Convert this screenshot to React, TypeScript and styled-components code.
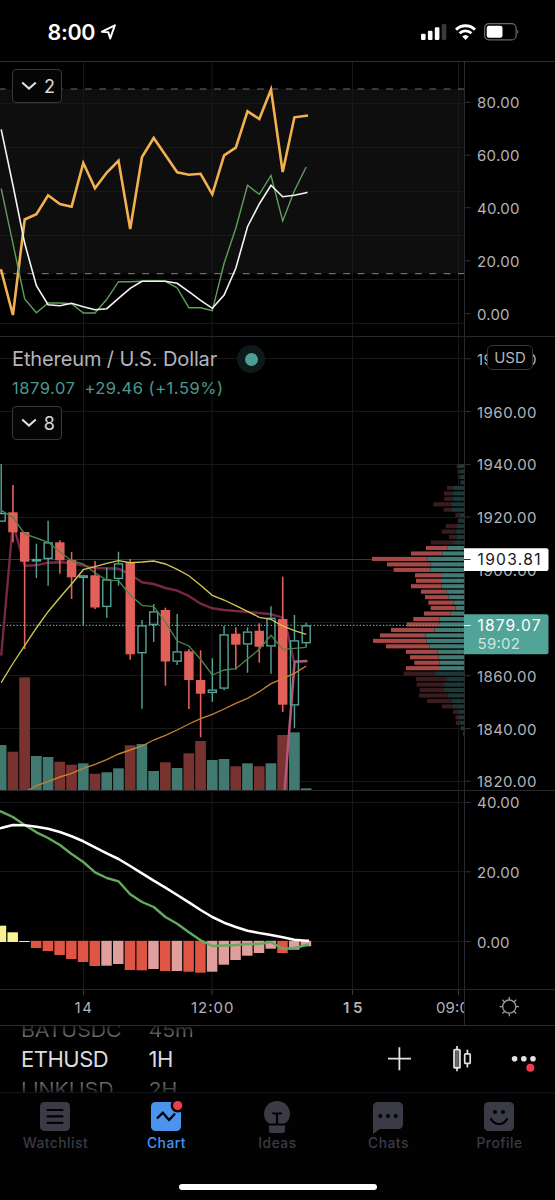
import React from 'react';
import styled, { createGlobalStyle } from 'styled-components';

const GlobalStyle = createGlobalStyle`
  * { box-sizing: border-box; }
  body { margin: 0; background: #000; }
`;

const c = {
  up: '#55a399',
  down: '#e1605a',
  grid: '#17181b',
  line: '#26282e',
  label: '#b3b3b8',
  muted: '#3a3b46',
  blue: '#4a94ee',
  badge: '#f23b4c',
};

const Screen = styled.div`
  width: 555px;
  height: 1200px;
  display: flex;
  flex-direction: column;
  overflow: hidden;
  background: #000;
  color: #fff;
  font-family: Inter, 'Liberation Sans', sans-serif;
`;

const StatusBar = styled.header`
  flex: none;
  height: 62px;
  padding: 2px 36px 0 47.5px;
  display: flex;
  align-items: center;
  justify-content: space-between;
  border-bottom: 1px solid #2b2e36;
`;

const Clock = styled.div`
  display: flex;
  align-items: center;
  gap: 5.5px;
  font-size: 21.5px;
  font-weight: 600;
  letter-spacing: -0.35px;
`;

const StatusIcons = styled.div`
  display: flex;
  align-items: center;
  gap: 8px;
`;

const Pane = styled.section<{ $h: number }>`
  position: relative;
  flex: none;
  height: ${(p) => p.$h}px;
  display: grid;
  grid-template-columns: 464px 91px;
  border-bottom: 1px solid ${c.line};
`;

const Drawing = styled.svg`
  display: block;
  overflow: hidden;
`;

const AxisText = styled.text<{ $bold?: boolean }>`
  font-family: Inter, 'Liberation Sans', sans-serif;
  font-size: 15px;
  font-weight: ${(p) => (p.$bold ? 600 : 400)};
  fill: ${c.label};
`;

const PriceText = styled(AxisText)`
  font-size: 15.6px;
`;

const Legend = styled.div<{ $top: number }>`
  position: absolute;
  left: 12px;
  top: ${(p) => p.$top}px;
  display: flex;
  flex-direction: column;
  align-items: flex-start;
`;

const TitleRow = styled.div`
  display: flex;
  align-items: center;
  gap: 20px;
  height: 28px;
`;

const Title = styled.span`
  font-size: 20px;
  letter-spacing: -0.12px;
  color: #b4b4b9;
  white-space: nowrap;
`;

const LiveDot = styled.span`
  width: 28px;
  height: 28px;
  border-radius: 50%;
  background: #0c1b1a;
  display: grid;
  place-items: center;
  &::after {
    content: '';
    width: 13px;
    height: 13px;
    border-radius: 50%;
    background: #4d9e93;
  }
`;

const Quote = styled.div`
  display: flex;
  gap: 9px;
  height: 20px;
  margin: 5px 0 8px;
  line-height: 20px;
  font-size: 16.5px;
  letter-spacing: 0.53px;
  color: #4a998e;
  white-space: nowrap;
`;

const CollapseButton = styled.button`
  width: 50px;
  height: 34px;
  padding: 0 6px 0 8px;
  display: flex;
  align-items: center;
  justify-content: space-between;
  border: 1px solid #343741;
  border-radius: 4px;
  background: #050506;
  color: #d8d8dc;
  font: 400 18px Inter, 'Liberation Sans', sans-serif;
`;

const CurrencyBadge = styled.div`
  position: absolute;
  left: 487px;
  top: 8px;
  width: 46px;
  height: 25px;
  display: grid;
  place-items: center;
  border: 1px solid #33353f;
  border-radius: 5px;
  background: #000;
  font-size: 15px;
  color: ${c.label};
`;

const TimeAxis = styled.div`
  flex: none;
  height: 36px;
  display: grid;
  grid-template-columns: 464px 91px;
  border-bottom: 1px solid #2b2e36;
`;

const Toolbar = styled.div`
  flex: none;
  height: 67px;
  padding: 0 18px 0 21px;
  display: flex;
  align-items: center;
  border-bottom: 1px solid #131418;
  overflow: hidden;
`;

const Wheel = styled.div<{ $w: number }>`
  width: ${(p) => p.$w}px;
  height: 67px;
  display: flex;
  flex-direction: column;
  align-items: flex-start;
  justify-content: center;
  gap: 1.5px;
  font-size: 22px;
  letter-spacing: -0.5px;
  white-space: nowrap;
`;

const WheelItem = styled.div<{ $edge?: 'top' | 'bottom' }>`
  flex: none;
  height: 28px;
  line-height: 28px;
  color: ${(p) => (p.$edge ? 'transparent' : '#dcdcde')};
  background: ${(p) =>
    p.$edge ? `linear-gradient(to ${p.$edge}, #727275 20%, #2a2a2c 65%)` : 'none'};
  background-clip: ${(p) => (p.$edge ? 'text' : 'border-box')};
  font-size: ${(p) => (p.$edge ? 21.5 : 22)}px;
  letter-spacing: ${(p) => (p.$edge ? -0.2 : -0.5)}px;
  transform: ${(p) => (p.$edge ? 'scaleY(0.85)' : 'none')};
`;

const Actions = styled.div`
  flex: 1;
  display: flex;
  justify-content: flex-end;
`;

const TabBar = styled.nav`
  flex: none;
  height: 91px;
  display: grid;
  grid-template-columns: repeat(5, 111px);
  background: #020202;
`;

const Tab = styled.div<{ $active?: boolean }>`
  padding-top: 6px;
  display: flex;
  flex-direction: column;
  align-items: center;
  color: ${(p) => (p.$active ? c.blue : c.muted)};
`;

const TabIcon = styled.svg`
  display: block;
  margin-right: 1px;
`;

const TabLabel = styled.span`
  margin-top: -1px;
  font-size: 13.8px;
  line-height: 18px;
  font-weight: 500;
  letter-spacing: 0.5px;
`;

const HomeArea = styled.footer`
  flex: 1;
  display: flex;
  justify-content: center;
  background: #020202;
`;

const HomeIndicator = styled.div`
  width: 198px;
  height: 6px;
  border-radius: 3px;
  background: #fff;
`;

const barX = (i: number) => 1.2 + i * 11.73;
const path = (ys: number[]) => ys.map((y, i) => `${barX(i).toFixed(1)},${y}`).join(' ');

const gridX = [83.5, 212, 352.5, 458.5];

const Grid = ({ top, height, rows }: { top: number; height: number; rows: number[] }) => (
  <g stroke={c.grid} strokeWidth={1}>
    {gridX.map((x) => <line key={x} x1={x} x2={x} y1={top} y2={top + height} />)}
    {rows.map((y) => <line key={y} x1={0} x2={464} y1={y} y2={y} />)}
  </g>
);

const Axis = ({ top, height, ticks, children }: {
  top: number; height: number; ticks: [string, number][]; children?: React.ReactNode;
}) => (
  <Drawing width={91} height={height} viewBox={`464 ${top} 91 ${height}`}>
    <line x1={464.5} x2={464.5} y1={top} y2={top + height} stroke={c.line} />
    {ticks.map(([t, y]) => (
      <g key={t}>
        <line x1={465} x2={470.5} y1={y} y2={y} stroke="#303238" />
        <AxisText x={477} y={y + 6} textLength={t.length === 7 ? 59.5 : t.length === 5 ? 42.5 : 32.5}>{t}</AxisText>
      </g>
    ))}
    {children}
  </Drawing>
);

const rsi = [270.5, 315, 219.5, 214.3, 195.3, 204, 206.7, 163, 188.3, 172.5, 160.8, 229, 157, 138, 155, 172.3, 174.7, 173.8, 194.3, 155.3, 147.7, 111.3, 119, 89.5, 172, 117.3, 115.7];
const stochK = [188.7, 243.3, 299, 312.7, 303, 303, 303.7, 313, 313, 299.3, 281.7, 281.7, 281.3, 281, 281.3, 288, 307.7, 307.7, 310.7, 263.3, 228.3, 185.3, 194.3, 175.5, 221, 190.7, 167];
const stochD = [129.3, 185, 243.3, 285.7, 304.7, 305.7, 303.3, 306.7, 309.7, 308.7, 298.3, 288.3, 281.3, 281.3, 281.3, 283.3, 291.7, 300.3, 308.3, 295, 268.3, 226.7, 204, 185.3, 196.7, 195.3, 192.7];

const volume: [number, 0 | 1][] = [
  [745, 1], [751.7, 0], [677.3, 0], [756, 1], [757, 1], [761.7, 0], [764.7, 0], [763.3, 1], [773.7, 0],
  [772.3, 1], [768.3, 1], [745.3, 0], [744, 1], [771, 1], [762.3, 0], [768, 1], [753.3, 0], [741, 0],
  [760, 1], [759, 1], [766.3, 0], [763.3, 1], [766.3, 0], [763.3, 1], [735, 0], [732.3, 1], [788.3, 1],
];

// [wick top, body top, body bottom, wick bottom, rising]
const candles: [number, number, number, number, 0 | 1][] = [
  [464, 513, 521.7, 521.7, 1], [485, 512.3, 532.3, 542.3, 0], [532, 532, 561.7, 649, 0],
  [543.7, 559, 561.5, 578, 1], [520.7, 542.3, 559, 585.7, 1], [540.3, 542.3, 560.3, 573.7, 0],
  [552, 560, 577.3, 599, 0], [575, 575.3, 578, 625, 1], [561, 575.3, 607.5, 609, 0],
  [567.7, 579.3, 607, 617.7, 1], [551.7, 563.3, 579, 585.7, 1], [559, 562.7, 654.3, 659.7, 0],
  [620, 625.3, 653.3, 708.7, 1], [604, 611.3, 625, 642, 1], [607.7, 610, 661.5, 685.7, 0],
  [614, 651.3, 661.7, 665, 1], [649, 651.3, 680, 709, 0], [650.3, 680, 693.7, 737.3, 0],
  [658.3, 689.5, 693, 702, 1], [626, 634.3, 688.7, 690.3, 1], [627.3, 633.7, 644.7, 669.7, 0],
  [627.3, 631.5, 644.5, 672.7, 1], [623.3, 630.7, 646.7, 662.7, 0], [606.3, 617.7, 646.5, 673.7, 1],
  [576.7, 619, 704.7, 712, 0], [615, 640.3, 705.5, 728, 1], [622.7, 625.3, 643.3, 647.3, 1],
];

const maYellow = [682.7, 663.5, 645.7, 628, 611.7, 597.5, 584, 569.7, 566.7, 563.3, 560.7, 562.7, 562, 561, 564, 569.3, 575.7, 585.3, 595.3, 600, 605.7, 611.3, 617.3, 619.3, 626, 630.7, 634.3];
const maGreen = [510.3, 517.3, 534, 538, 542.3, 551.7, 560.7, 564, 572.7, 580.3, 580.7, 595, 605.3, 606.7, 622, 641, 646, 659.3, 675, 670, 668.7, 659, 649.3, 635.3, 649.3, 648.3, 647.3];
const maMaroon = [655.7, 523, 565.7, 565.3, 562.7, 562.3, 563, 565.7, 568, 568.3, 568.7, 574.3, 582.3, 584, 588, 590.7, 596, 603.7, 608.3, 610, 611, 612, 613, 614.3, 617.7];
const maOrange = [785.5, 781.7, 777, 773.3, 768.3, 764.3, 759.7, 754, 750, 746, 740, 735.3, 730, 724, 718.7, 714.3, 709, 703.3, 698.3, 691.7, 683.7, 678.7, 673.3, 666];

// Each row: total width and rising part width, in thirds of a pixel from the right edge.
const profile: [number, number][] = [
  [22, 18], [20, 13], [16, 11], [12, 10], [51, 35], [60, 35], [59, 35], [92, 40], [61, 38], [26, 13],
  [19, 15], [55, 21], [67, 25], [45, 21], [100, 33], [114, 49], [159, 65], [276, 109], [231, 100], [211, 101],
  [147, 66], [144, 66], [159, 67], [129, 53], [117, 47], [107, 31], [100, 25], [120, 40], [152, 73], [172, 73],
  [219, 88], [252, 115], [273, 113], [234, 103], [174, 80], [162, 76], [149, 73], [174, 75], [181, 88], [144, 53],
  [142, 60], [133, 60], [135, 50], [111, 38], [67, 33], [33, 15], [26, 15], [24, 13], [10, 9], [3, 3],
];

const macd = [811.7, 817, 825, 832.3, 838, 845, 854, 862, 872.3, 878, 881.3, 894.3, 902, 907, 917, 923.7, 932.3, 940.3, 946, 945.5, 945, 944, 944, 942, 948.7, 948, 945];
const signal = [828, 825, 825.3, 826.7, 828.7, 832, 836.3, 841.3, 847.3, 853.3, 859, 866, 873.3, 880.7, 887.7, 895, 902.3, 910, 917, 922.7, 927, 930.7, 933, 935, 937.3, 939.7, 940.7];
const hist: [number, 'y' | 'r' | 'p'][] = [
  [925.7, 'y'], [932.3, 'y'], [941, 'y'], [948, 'r'], [951, 'r'], [955, 'r'], [959, 'r'], [962, 'r'], [966, 'r'],
  [965.7, 'p'], [964, 'p'], [970, 'r'], [970.3, 'r'], [969, 'p'], [971, 'r'], [971, 'p'], [971.7, 'r'],
  [972.7, 'r'], [971.7, 'p'], [964.7, 'p'], [960, 'p'], [955.7, 'p'], [953, 'p'], [948.7, 'p'], [953, 'r'],
  [949.7, 'p'], [946.3, 'p'],
];
const histColor = { y: '#faf192', r: '#e05443', p: '#e09e9d' };

const Chevron = () => (
  <svg width="16" height="10" viewBox="0 0 16 10" fill="none" stroke="#e0e0e4" strokeWidth="2">
    <path d="M1.2 1.4 8 7.6 14.8 1.4" />
  </svg>
);

const OscillatorPane = () => (
  <Pane $h={275}>
    <Drawing width={464} height={274} viewBox="0 62 464 274">
      <rect x={0} y={89} width={464} height={184.7} fill="#0e0e0e" />
      <Grid top={62} height={274} rows={[103.5, 147.5, 191.5, 235.5, 279.5, 323.5]} />
      <g stroke="#6c6c6c" strokeWidth={1.2} strokeDasharray="6.8 7.55" strokeDashoffset={1.2}>
        <line x1={0} x2={464} y1={89} y2={89} />
        <line x1={0} x2={464} y1={273.7} y2={273.7} />
      </g>
      <g fill="none">
        <polyline points={`0,270 ${path(rsi)} 308,115.5`} stroke="#f2b150" strokeWidth={2.6} />
        <polyline points={path(stochK)} stroke="#5f9f5b" strokeWidth={1.4} />
        <polyline points={`${path(stochD)} 307.5,192.4`} stroke="#f4f4f4" strokeWidth={1.6} />
      </g>
    </Drawing>
    <Axis top={62} height={274} ticks={[['80.00', 102.3], ['60.00', 155.2], ['40.00', 207.7], ['20.00', 260.8], ['0.00', 313.7]]} />
    <Legend $top={7}>
      <CollapseButton><Chevron />2</CollapseButton>
    </Legend>
  </Pane>
);

const priceRows: [string, number][] = [
  ['1980.00', 358.7], ['1960.00', 411.6], ['1940.00', 464.4], ['1920.00', 517.1], ['1900.00', 570],
  ['1860.00', 675.7], ['1840.00', 728.5], ['1820.00', 781.3],
];

const PricePane = () => (
  <Pane $h={454}>
    <Drawing width={464} height={453} viewBox="0 337 464 453">
      <Grid top={337} height={453} rows={[358.5, 411.5, 464.5, 517.5, 570.5, 622.5, 675.5, 728.5, 781.5]} />
      <line x1={0} x2={464} y1={559.5} y2={559.5} stroke="#37383b" />
      {profile.map(([w, up], k) => {
        const y = 464 + k * 5.463;
        const inside = k >= 15 && k <= 37;
        return (
          <g key={k}>
            <rect x={464 - w / 3} y={y} width={(w - up) / 3} height={4.1} fill={inside ? '#a54846' : '#3a1c1e'} />
            <rect x={464 - up / 3} y={y} width={up / 3} height={4.1} fill={inside ? '#427b74' : '#1d3836'} />
          </g>
        );
      })}
      {volume.map(([y, up], i) => (
        <rect key={i} x={barX(i) - 5.4} y={y} width={10.7} height={790 - y} fill={up ? '#41786f' : '#78322f'} />
      ))}
      <line x1={0} x2={464} y1={625.3} y2={625.3} stroke="#5aa79d" strokeWidth={1.2} strokeDasharray="1.4 1.9" />
      <polyline points={`${path(maMaroon)} 287.7,633 294,661.7`} fill="none" stroke="#782648" strokeWidth={2.4} />
      <polyline points="307.5,661 294.6,661.7 284.5,792" fill="none" stroke="#b4587c" strokeWidth={2.5} />
      {candles.map(([hi, a, b, lo, up], i) => {
        const x = barX(i);
        return up ? (
          <g key={i} stroke={c.up} strokeWidth={1.4} fill="none">
            <line x1={x} x2={x} y1={hi} y2={a} />
            <rect x={x - 4} y={a + 0.6} width={8} height={Math.max(b - a - 1.2, 1)} />
            <line x1={x} x2={x} y1={b} y2={lo} />
          </g>
        ) : (
          <g key={i} fill={c.down}>
            <rect x={x - 0.8} y={hi} width={1.6} height={lo - hi} />
            <rect x={x - 4.7} y={a} width={9.4} height={b - a} />
          </g>
        );
      })}
      <g fill="none" strokeWidth={1.35}>
        <polyline points={path(maGreen)} stroke="#4c864b" />
        <polyline points={path(maYellow)} stroke="#cfc654" />
        <polyline points={`28.3,790.3 ${maOrange.map((y, i) => `${barX(i + 3)},${y}`).join(' ')}`} stroke="#c5832f" />
      </g>
    </Drawing>
    <Axis top={337} height={453} ticks={priceRows}>
      <path d="M464 548.3h82.5a2 2 0 0 1 2 2V569a2 2 0 0 1-2 2H464z" fill="#fff" />
      <line x1={464} x2={470.5} y1={559.5} y2={559.5} stroke="#333" />
      <PriceText x={477.5} y={565.2} textLength={63} style={{ fill: '#17181c' }}>1903.81</PriceText>
      <path d="M464 614.3h82.5a2 2 0 0 1 2 2v36a2 2 0 0 1-2 2H464z" fill="#52a398" />
      <line x1={464} x2={470.5} y1={625.5} y2={625.5} stroke="#fff" />
      <PriceText x={477.5} y={631} textLength={63} style={{ fill: '#fff' }}>1879.07</PriceText>
      <AxisText x={477.5} y={648.8} textLength={42.5} style={{ fill: '#cbe5e1' }}>59:02</AxisText>
    </Axis>
    <CurrencyBadge>USD</CurrencyBadge>
    <Legend $top={8}>
      <TitleRow><Title>Ethereum / U.S. Dollar</Title><LiveDot /></TitleRow>
      <Quote><span>1879.07</span><span>+29.46 (+1.59%)</span></Quote>
      <CollapseButton><Chevron />8</CollapseButton>
    </Legend>
  </Pane>
);

const MacdPane = () => (
  <Pane $h={199}>
    <Drawing width={464} height={198} viewBox="0 791 464 198">
      <Grid top={791} height={198} rows={[802.5, 871.5, 941.5]} />
      {hist.map(([y, k], i) => (
        <rect
          key={i}
          x={barX(i) - 5.5}
          y={k === 'y' ? y : 940.8}
          width={10.5}
          height={k === 'y' ? 942 - y : y - 940.8}
          fill={histColor[k]}
        />
      ))}
      <g fill="none" strokeLinejoin="round">
        <polyline points={`-1,811 ${path(macd)} 309,944.3`} stroke="#65ab5f" strokeWidth={2.4} />
        <polyline points={`-1,828.5 ${path(signal)} 309,940.8`} stroke="#fff" strokeWidth={2.6} />
      </g>
    </Drawing>
    <Axis top={791} height={198} ticks={[['40.00', 802.4], ['20.00', 871.8], ['0.00', 941.5]]} />
  </Pane>
);

const TimeScale = () => (
  <TimeAxis>
    <Drawing width={464} height={35} viewBox="0 990 464 35">
      {gridX.map((x) => <line key={x} x1={x} x2={x} y1={990} y2={995} stroke="#3a3b40" />)}
      <AxisText x={74.5} y={1013.3} textLength={17.5}>14</AxisText>
      <AxisText x={191} y={1013.3} textLength={42.5}>12:00</AxisText>
      <AxisText x={343} y={1013.3} textLength={19.5} $bold>15</AxisText>
      <AxisText x={436} y={1013.3} textLength={42.5}>09:00</AxisText>
    </Drawing>
    <Drawing width={91} height={35} viewBox="464 990 91 35">
      <line x1={464.5} x2={464.5} y1={990} y2={1025} stroke={c.line} />
      <g transform="translate(509.3 1006.6)" fill="none" stroke="#9a9aa0" strokeWidth={1.3}>
        <circle r={6.6} />
        {[0, 45, 90, 135, 180, 225, 270, 315].map((a) => (
          <line key={a} x1={6.6} x2={9.7} y1={0} y2={0} transform={`rotate(${a})`} />
        ))}
      </g>
    </Drawing>
  </TimeAxis>
);

const ActionIcons = () => (
  <Actions>
    <svg width="155" height="40" viewBox="382 1039 155 40" fill="none" stroke="#e2e2e4">
      <path d="M388 1058.7h23M399.4 1047.3v23" strokeWidth="1.8" />
      <g strokeWidth="1.7">
        <rect x="454" y="1049.5" width="6" height="18.4" rx="1" fill="#77777a" />
        <path d="M457 1046v4M457 1067v4.3M467.4 1049.7v4.5M467.4 1063v4.6" />
        <rect x="464.7" y="1053.8" width="5.5" height="9.6" rx="1" />
      </g>
      <path d="M455.8 1051.5v14.500M458.2 1052.500v13.500" stroke="#222" strokeWidth="1" strokeDasharray="1 1" />
      <g fill="#e2e2e4" stroke="none">
        <circle cx="514.6" cy="1058.8" r="2.8" />
        <circle cx="523.8" cy="1058.8" r="2.8" />
        <circle cx="533" cy="1058.8" r="2.8" />
        <circle cx="530.3" cy="1067.8" r="4" fill={c.badge} />
      </g>
    </svg>
  </Actions>
);

const tabs: { name: string; icon: React.ReactNode }[] = [
  {
    name: 'Watchlist',
    icon: (
      <>
        <rect x="3" y="3" width="30" height="29" rx="4.5" fill="currentColor" />
        <path d="M10.5 11h15M10.5 17.3h15M10.5 23.8h15" stroke="#020202" strokeWidth="2.2" strokeLinecap="round" />
      </>
    ),
  },
  {
    name: 'Chart',
    icon: (
      <>
        <rect x="3" y="3" width="30" height="29" rx="4.5" fill="currentColor" />
        <path d="M9 19.5 14.8 13.8 21 21 27 14.6" fill="none" stroke="#020202" strokeWidth="2.3" />
        <circle cx="29.7" cy="6.5" r="7" fill="#020202" />
        <circle cx="29.7" cy="6.5" r="4.6" fill={c.badge} />
      </>
    ),
  },
  {
    name: 'Ideas',
    icon: (
      <>
        <path d="M18 2C25.500 2 31 7.800 31 15c0 4.500-2 7.500-5 9.500H10C7 22.500 5 19.500 5 15 5 7.800 10.500 2 18 2z" fill="currentColor" />
        <path d="M10 26.500h16v5a2.500 2.500 0 0 1-2.500 2.500h-11a2.500 2.500 0 0 1-2.500-2.500z" fill="currentColor" />
        <path d="M14 15v-.5h8v.5M18 15v10" fill="none" stroke="#020202" strokeWidth="2.200" />
      </>
    ),
  },
  {
    name: 'Chats',
    icon: (
      <>
        <path d="M7.500 3h21A4.500 4.500 0 0 1 33 7.500v18a4.500 4.500 0 0 1-4.500 4.500H10l-7 5V7.500A4.500 4.500 0 0 1 7.500 3z" fill="currentColor" />
        <g fill="#020202">
          <circle cx="10.300" cy="17" r="2" /><circle cx="18" cy="17" r="2" /><circle cx="25.700" cy="17" r="2" />
        </g>
      </>
    ),
  },
  {
    name: 'Profile',
    icon: (
      <>
        <rect x="3" y="3" width="30" height="29" rx="4.5" fill="currentColor" />
        <circle cx="14" cy="13" r="2" fill="#020202" />
        <circle cx="22" cy="13" r="2" fill="#020202" />
        <path d="M10 20c2 3.500 5 5 8 5s6-1.500 8-5" fill="none" stroke="#020202" strokeWidth="2.2" strokeLinecap="round" />
      </>
    ),
  },
];

export default function App() {
  return (
    <Screen>
      <GlobalStyle />
      <StatusBar>
        <Clock>
          8:00
          <svg width="15" height="16" viewBox="0 0 15 16" fill="none" stroke="#fff" strokeWidth="2" strokeLinejoin="round">
            <path d="M13.800 1.300 1 7.700 7.300 8.300 9.200 14.500z" />
          </svg>
        </Clock>
        <StatusIcons>
          <svg width="26" height="16" viewBox="0 0 26 16" fill="#fff">
            <rect x="0" y="9.700" width="4.600" height="6.300" rx="1.200" />
            <rect x="6.900" y="6.700" width="4.600" height="9.300" rx="1.200" />
            <rect x="13.800" y="3.300" width="4.600" height="12.700" rx="1.200" />
            <rect x="20.800" y="0" width="4.600" height="16" rx="1.200" fill="#3a3a3a" />
          </svg>
          <svg width="21" height="16" viewBox="0 0 21 16" fill="none" stroke="#fff" strokeWidth="2.900">
            <path d="M1 5.600a13.500 13.500 0 0 1 19 0" />
            <path d="M4.600 9.300a8.500 8.500 0 0 1 11.800 0" />
            <path d="M10.500 16 7.200 12.600a4.800 4.800 0 0 1 6.600 0z" fill="#fff" stroke="none" />
          </svg>
          <svg width="35" height="18" viewBox="0 0 35 18" fill="none">
            <rect x="0.600" y="0.600" width="31.500" height="16.300" rx="4.500" stroke="#6a6a6a" strokeWidth="1.200" />
            <rect x="2.700" y="2.700" width="15.800" height="12" rx="2.300" fill="#fff" />
            <path d="M33.300 6.500c1.500.7 1.500 3.900 0 4.600z" fill="#6a6a6a" />
          </svg>
        </StatusIcons>
      </StatusBar>
      <OscillatorPane />
      <PricePane />
      <MacdPane />
      <TimeScale />
      <Toolbar>
        <Wheel $w={127.5}>
          <WheelItem $edge="top">BATUSDC</WheelItem>
          <WheelItem>ETHUSD</WheelItem>
          <WheelItem $edge="bottom">LINKUSD</WheelItem>
        </Wheel>
        <Wheel $w={80}>
          <WheelItem $edge="top">45m</WheelItem>
          <WheelItem>1H</WheelItem>
          <WheelItem $edge="bottom">2H</WheelItem>
        </Wheel>
        <ActionIcons />
      </Toolbar>
      <TabBar>
        {tabs.map((t) => (
          <Tab key={t.name} $active={t.name === 'Chart'}>
            <TabIcon width="36" height="36" viewBox="0 0 36 36">{t.icon}</TabIcon>
            <TabLabel>{t.name}</TabLabel>
          </Tab>
        ))}
      </TabBar>
      <HomeArea><HomeIndicator /></HomeArea>
    </Screen>
  );
}
